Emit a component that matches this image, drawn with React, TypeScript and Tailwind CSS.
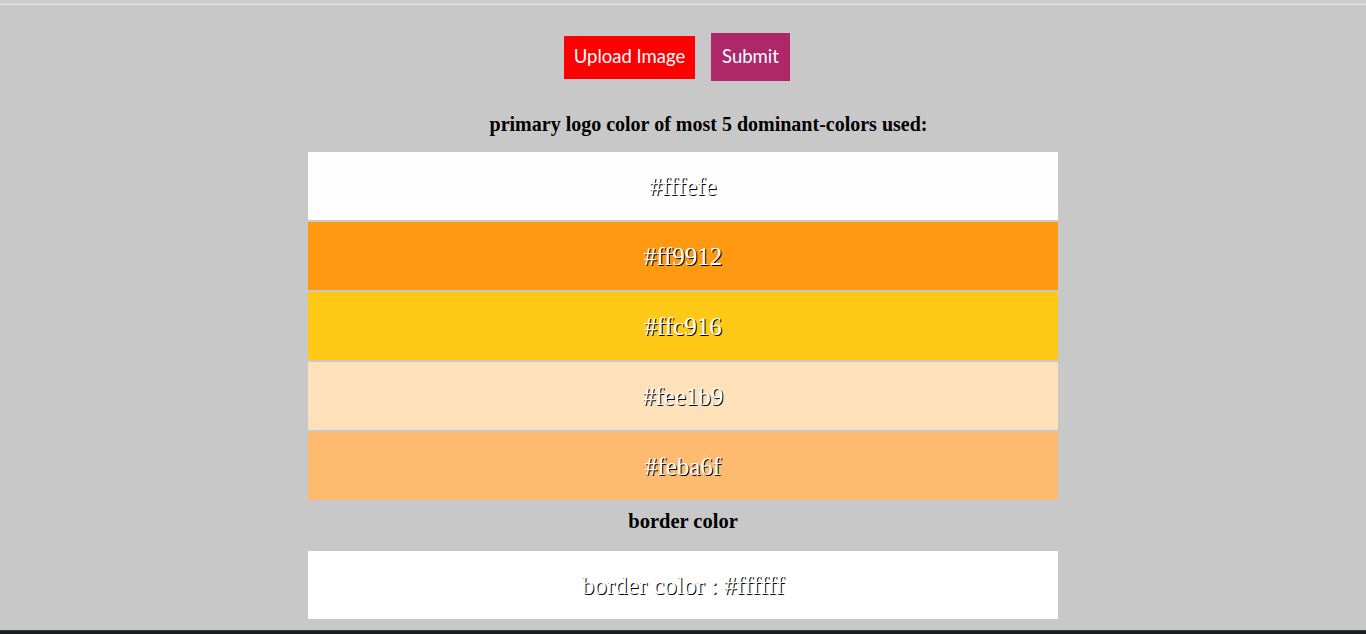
import React from "react";

const colors = [
  { hex: "#fffefe", bg: "bg-[#fffefe]" },
  { hex: "#ff9912", bg: "bg-[#ff9912]" },
  { hex: "#ffc916", bg: "bg-[#ffc916]" },
  { hex: "#fee1b9", bg: "bg-[#fee1b9]" },
  { hex: "#feba6f", bg: "bg-[#feba6f]" },
];

export default function App() {
  return (
    <div className="w-[1366px] h-[634px] bg-[#c8c8c8] flex flex-col overflow-hidden">
      <div className="h-[4px] bg-[#cdcdcd]" />
      <div className="h-[1px] bg-[#e6e6e6]" />
      <div className="flex-1 flex flex-col items-center">
        <div className="flex items-center gap-[16px] mt-[28px] pr-[12px] font-['Lato',sans-serif] text-white text-[18.5px]">
          <button className="bg-[#ff0000] h-[43px] w-[131px] flex items-center justify-center">Upload Image</button>
          <button className="bg-[#ad2769] h-[48px] w-[79px] flex items-center justify-center">Submit</button>
        </div>
        <div className="mt-[31px] pl-[51px] h-[24px] flex items-center font-['Liberation_Serif',serif] font-bold text-[20px] text-black leading-none">
          primary logo color of most 5 dominant-colors used:
        </div>
        <div className="mt-[16px] w-[750px] flex flex-col gap-[2px]">
          {colors.map((c) => (
            <div
              key={c.hex}
              className={`${c.bg} h-[68px] pt-[2px] flex items-center justify-center font-['Liberation_Serif',serif] text-[25px] text-white [text-shadow:1px_1px_0_#000]`}
            >
              {c.hex}
            </div>
          ))}
        </div>
        <div className="mt-[9px] h-[24px] flex items-center font-['Liberation_Serif',serif] font-bold text-[20.5px] text-black leading-none">
          border color
        </div>
        <div className="mt-[18px] w-[750px] h-[68px] pt-[2px] bg-white flex items-center justify-center font-['Liberation_Serif',serif] text-[25px] text-white [text-shadow:1px_1px_0_#000]">
          border color : #ffffff
        </div>
      </div>
      <div className="h-[1px] bg-[#2a3a48]" />
      <div className="h-[3px] bg-[#1b1d20]" />
    </div>
  );
}
